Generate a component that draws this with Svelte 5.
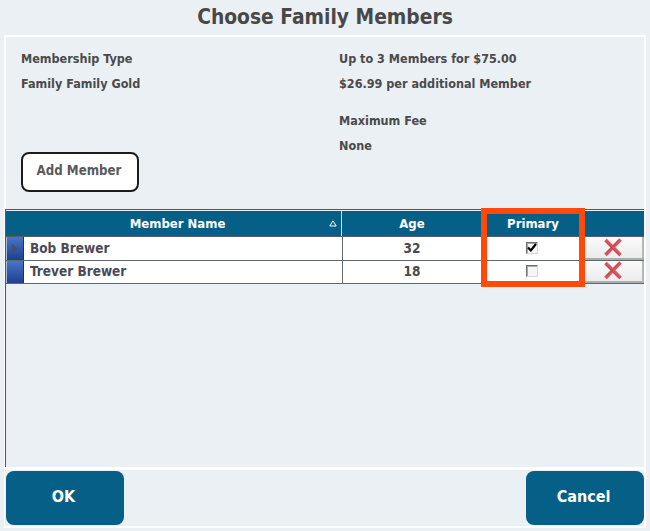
<script>
  const members = [
    { name: 'Bob Brewer', age: 32, primary: true, current: true },
    { name: 'Trever Brewer', age: 18, primary: false, current: false }
  ];
</script>

<div class="page">
  <h1>Choose Family Members</h1>
  <section class="panel main">
    <div class="info">
      <div class="col left">
        <div class="line">Membership Type</div>
        <div class="line">Family Family Gold</div>
        <button class="add">Add Member</button>
      </div>
      <div class="col right">
        <div class="line">Up to 3 Members for $75.00</div>
        <div class="line">$26.99 per additional Member</div>
        <div class="line gap">Maximum Fee</div>
        <div class="line">None</div>
      </div>
    </div>
    <div class="grid">
      <div class="row head">
        <div class="c name"><span class="label">Member Name</span><svg class="sort" width="8" height="7" viewBox="0 0 8 7"><path d="M4 .8 7.2 6H.8Z" fill="none" stroke="#fff" stroke-width="1"/></svg></div>
        <div class="c age">Age</div>
        <div class="c prim">Primary</div>
        <div class="c del"></div>
      </div>
      {#each members as m}
        <div class="row body">
          <div class="sel">
            {#if m.current}<svg width="6" height="9" viewBox="0 0 6 9"><path d="M0 0 6 4.5 0 9Z" fill="#45506a"/></svg>{/if}
          </div>
          <div class="c name2">{m.name}</div>
          <div class="c age">{m.age}</div>
          <div class="c prim">
            <span class="check">
              {#if m.primary}<svg width="10" height="9" viewBox="0 0 10 9"><path d="M1 4.5 3.8 7.4 9 1" fill="none" stroke="#000" stroke-width="2.2"/></svg>{/if}
            </span>
          </div>
          <div class="c del">
            <button class="x" aria-label="Delete">
              <svg width="20" height="19" viewBox="0 0 20 19"><path d="M2.5 2 17.5 17M17.5 1.5 2.5 17" stroke="#d9565e" stroke-width="3.6" fill="none"/><path d="M2.5 3.5 16.5 17.5M15.5 2.5 3 15.5" stroke="#a8383f" stroke-width=".8" fill="none" opacity=".75"/></svg>
            </button>
          </div>
        </div>
      {/each}
      <div class="highlight"></div>
    </div>
  </section>
  <section class="panel footer">
    <button class="action">OK</button>
    <button class="action">Cancel</button>
  </section>
</div>

<style>
  :global(body) { margin: 0; background: #ebf0f4; }
  .page {
    width: 650px; height: 531px; box-sizing: border-box; overflow: hidden;
    padding: 0 4px; color: #4a4a4a;
    font-family: "DejaVu Sans Condensed", "DejaVu Sans", sans-serif; font-weight: 700; font-size: 12.5px;
  }
  h1 { margin: 0; height: 35px; line-height: 35px; text-align: center; font-size: 20.8px; font-weight: 700; color: #484848; }
  .panel { border: 2px solid #fff; box-sizing: border-box; }
  .main { height: 433px; display: flex; flex-direction: column; border-bottom-width: 1px; }
  .info { display: flex; height: 172px; box-sizing: border-box; padding: 13px 0 0 15px; }
  .col { display: flex; flex-direction: column; }
  .left { width: 318px; }
  .line { height: 25px; line-height: 17px; }
  .gap { margin-top: 12px; }
  .add {
    margin-top: 52px; width: 118px; height: 40px; background: #fff; border: 2px solid #1c1c1c; border-radius: 8px;
    font: inherit; font-size: 13.2px; color: #5a5a5a; padding: 0 2px 3px 0;
  }
  .grid { position: relative; flex: 1; border-left: 1px solid #4d5a66; border-top: 1px solid #4d5a66; margin-left: -1px; padding-top: 1px; font-size: 13px; }
  .row { display: flex; }
  .head { height: 26px; background: #065f87; color: #fff; box-sizing: border-box; border-bottom: 1px solid #50606a; align-items: stretch; }
  .head .c { display: flex; align-items: center; justify-content: center; border-right: 1px solid #d6dde2; box-sizing: border-box; position: relative; }
  .head .name { width: 336px; padding-left: 8px; }
  .sort { position: absolute; right: 4px; top: 9px; }
  .age { width: 141px; }
  .prim { width: 101px; }
  .del { width: 60px; }
  .head .del { border-right: 0; }
  .body { height: 23.5px; background: #fff; border-bottom: 1px solid #5f6a70; box-sizing: border-box; }
  .body .c { display: flex; align-items: center; box-sizing: border-box; padding-bottom: 1px; }
  .body .age { justify-content: center; border-left: 1px solid #5f6a70; border-right: 1px solid #5f6a70; padding-right: 1px; font-size: 13.5px; }
  .body .prim { justify-content: center; padding-right: 4px; }
  .body .del { padding-bottom: 0; }
  .sel {
    width: 18px; flex: none; background: linear-gradient(#4a74c4, #1c3f94); border-left: 1px solid #a9bbd0; border-right: 1px solid #16336e;
    display: flex; align-items: center; padding-left: 5px; box-sizing: border-box;
  }
  .name2 { width: 318px; padding-left: 6px; color: #4a4a55; font-size: 13.5px; }
  .check { width: 12px; height: 12px; box-sizing: border-box; border: 1px solid; border-color: #6f6f6f #d8d8d8 #d8d8d8 #6f6f6f; box-shadow: inset 1px 1px 0 #a8a8a8; display: flex; align-items: center; justify-content: center; background: #f6f6f6; }
  .x { width: 60px; height: 100%; padding: 0; border: 0; border-right: 2px solid #b5b8b8; border-bottom: 2px solid #a9adad; background: linear-gradient(#fafafa, #ececec); display: flex; align-items: center; justify-content: center; }
  .highlight { position: absolute; left: 475px; top: -2px; width: 104px; height: 79px; border: 6px solid #ff4a0a; box-sizing: border-box; pointer-events: none; }
  .footer { height: 60px; display: flex; justify-content: space-between; align-items: center; border-left-width: 1px; }
  .action { width: 118px; height: 54px; margin: 0 0 0 1px; background: #065f87; color: #fff; border: 0; border-radius: 8px; font: inherit; font-size: 16px; padding: 0 3px 3px 0; }
</style>
